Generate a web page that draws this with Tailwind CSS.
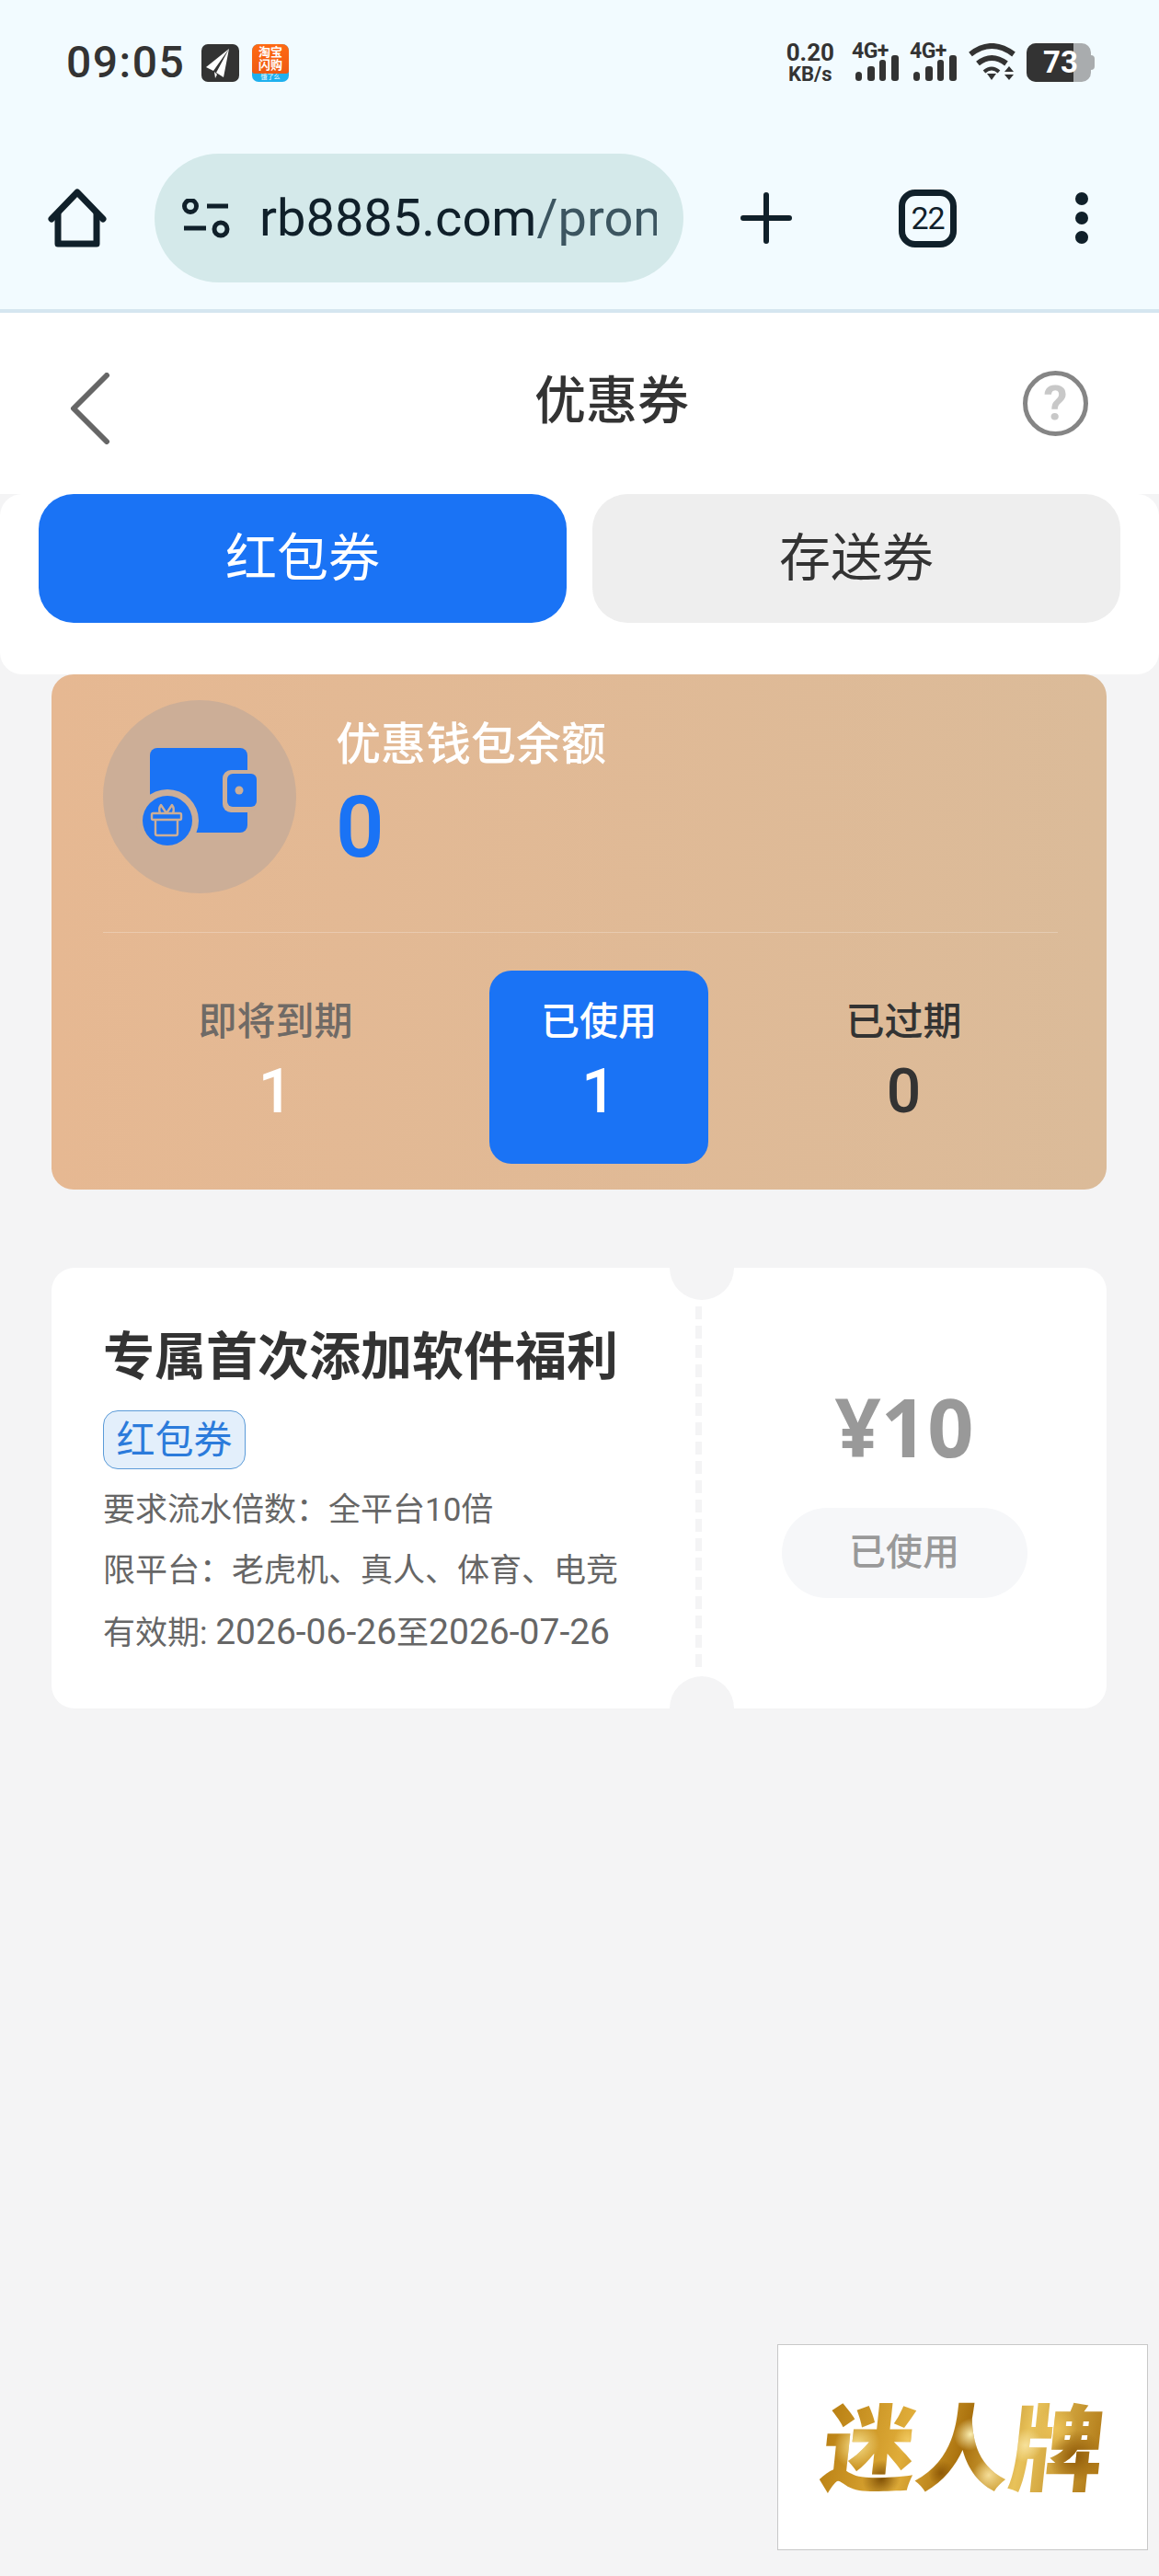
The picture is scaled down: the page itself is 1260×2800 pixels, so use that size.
<!DOCTYPE html>
<html lang="zh-CN">
<head>
  <meta charset="UTF-8">
  <meta name="viewport" content="width=device-width, initial-scale=1.0">
  <script src="https://cdn.jsdelivr.net/npm/@tailwindcss/browser@4"></script>
  <title>优惠券</title>
</head>
<body class="relative min-h-[2800px] bg-[#f4f4f5] font-[Roboto,'Noto_Sans_CJK_SC',sans-serif] text-[#333]">

  <!-- Status bar + browser bar -->
  <div class="bg-[#f2fbff] border-b-4 border-[#d5e6f0]">
    <div class="flex items-center h-[138px] pb-[2px] pl-[72px] pr-[70px]">
      <span class="w-[147px] text-[48px] leading-none font-medium tracking-[1.5px] text-[#333]">09:05</span>
      <svg class="w-[41px] h-[41px]" viewBox="0 0 41 41">
        <rect width="41" height="41" rx="7" fill="#333"/>
        <path d="M30 5 L5 25 L13 29 Z M30 5 L16 31 L24 36 Z M14 30 L15 37 L17 33 Z" fill="#fff"/>
      </svg>
      <div class="ml-[14px] w-[40px] h-[41px] rounded-[7px] overflow-hidden flex flex-col bg-[#1fb0ee]">
        <div class="h-[32px] bg-linear-to-b from-[#ff6a13] to-[#ee5a12] text-white text-[13px] leading-[14px] font-bold text-center pt-[2px] rounded-b-[3px]">淘宝<br>闪购</div>
        <div class="text-white text-[7px] leading-[9px] text-center">饿了么</div>
      </div>

      <div class="ml-auto flex items-center text-[#333]">
        <div class="flex flex-col items-center gap-[2px] font-bold">
          <span class="text-[26px] leading-[24px]">0.20</span>
          <span class="text-[22px] leading-[20px]">KB/s</span>
        </div>
        <svg class="ml-[19px] w-[51px] h-[43px] overflow-visible" viewBox="0 0 51 43" fill="#333">
          <text x="0" y="16" font-size="23" font-weight="700" letter-spacing="-0.5">4G+</text>
          <rect x="4" y="31" width="7" height="10" rx="3.5"/><rect x="17" y="25" width="8" height="16" rx="3"/>
          <rect x="30" y="18" width="7" height="23" rx="3"/><rect x="43" y="13" width="8" height="28" rx="3"/>
        </svg>
        <svg class="ml-[12px] w-[51px] h-[43px] overflow-visible" viewBox="0 0 51 43" fill="#333">
          <text x="0" y="16" font-size="23" font-weight="700" letter-spacing="-0.5">4G+</text>
          <rect x="4" y="31" width="7" height="10" rx="3.5"/><rect x="17" y="25" width="8" height="16" rx="3"/>
          <rect x="30" y="18" width="7" height="23" rx="3"/><rect x="43" y="13" width="8" height="28" rx="3"/>
        </svg>
        <svg class="ml-[12px] w-[53px] h-[42px]" viewBox="0 0 53 42" fill="none" stroke="#333" stroke-width="6">
          <path d="M3 12 Q26 -6 50 12"/>
          <path d="M11 22 Q26 10 42 22"/>
          <path d="M21 33 H31 L26 40 Z" fill="#333" stroke="none"/>
          <path d="M18 31 Q26 24 34 31" stroke-width="4"/>
          <path d="M40 31 L45 25 L50 31 Z M40 34 H50 L45 40 Z" fill="#333" stroke="none"/>
        </svg>
        <div class="ml-[11px] relative w-[74px] h-[42px]">
          <div class="flex h-[42px] w-[70px] rounded-[10px] overflow-hidden bg-[#a9acae]">
            <div class="w-[51px] bg-[#333]"></div>
          </div>
          <div class="absolute left-[70px] top-[13px] w-[4px] h-[16px] rounded-r-[4px] bg-[#a9acae]"></div>
          <span class="absolute left-[18px] top-0 text-[33px] leading-[42px] font-bold text-white">73</span>
        </div>
      </div>
    </div>

    <div class="flex items-center h-[198px] pl-[52px]">
      <svg class="w-[64px] h-[64px]" viewBox="0 0 64 64" fill="none" stroke="#10202a" stroke-width="7" stroke-linecap="round" stroke-linejoin="round">
        <path d="M4 33 L32 4 L60 33"/>
        <path d="M11 27 V60 H53 V27"/>
      </svg>
      <div class="ml-[52px] w-[575px] h-[140px] rounded-full bg-[#d4e9ea] flex items-center pl-[30px]">
        <svg class="w-[52px] h-[43px] shrink-0" viewBox="0 0 52 43" fill="none" stroke="#10202a" stroke-width="5">
          <circle cx="9" cy="8" r="6.5"/>
          <path d="M27 8 H50"/>
          <path d="M2 32 H26"/>
          <circle cx="42" cy="33" r="7"/>
        </svg>
        <div class="ml-[32px] w-[432px] overflow-hidden whitespace-nowrap text-[56px] leading-[70px] text-[#10202a]">rb8885.com<span class="text-[#3c5560]">/prom</span></div>
      </div>
      <svg class="ml-[62px] w-[56px] h-[56px]" viewBox="0 0 56 56" stroke="#10202a" stroke-width="6" stroke-linecap="round">
        <path d="M3 28 H53 M28 3 V53"/>
      </svg>
      <div class="ml-[116px] w-[63px] h-[63px] rounded-[18px] border-[7px] border-[#10202a] flex items-center justify-center text-[34px] leading-none tracking-[-1px] text-[#10202a]">22</div>
      <div class="ml-[129px] flex flex-col gap-[7px]">
        <div class="w-[14px] h-[14px] rounded-full bg-[#10202a]"></div>
        <div class="w-[14px] h-[14px] rounded-full bg-[#10202a]"></div>
        <div class="w-[14px] h-[14px] rounded-full bg-[#10202a]"></div>
      </div>
    </div>
  </div>

  <!-- Page header -->
  <div class="bg-white h-[197px] flex items-center pl-[76px] pr-[77px]">
    <svg class="w-[44px] h-[78px] mt-[10px]" viewBox="0 0 44 78" fill="none" stroke="#666" stroke-width="6" stroke-linecap="round" stroke-linejoin="round">
      <path d="M40 3 L4 39 L40 75" />
    </svg>
    <h1 class="ml-[461px] text-[56px] leading-[70px] font-medium text-[#333] -mt-[6px]">优惠券</h1>
    <div class="ml-auto w-[71px] h-[71px] rounded-full border-[5px] border-[#858585] flex items-center justify-center text-[52px] leading-none font-bold text-[#c8c8c8]">?</div>
  </div>

  <!-- Coupon type tabs -->
  <div class="bg-white rounded-[24px] h-[196px] px-[42px] flex gap-[28px]">
    <div class="w-[574px] h-[140px] rounded-[38px] bg-[#1a73f5] flex items-center justify-center text-[56px] text-white">红包券</div>
    <div class="w-[574px] h-[140px] rounded-[38px] bg-[#eeeeee] flex items-center justify-center text-[56px] text-[#333]">存送券</div>
  </div>

  <!-- Wallet card -->
  <div class="mx-[56px] w-[1147px] h-[560px] rounded-[24px] bg-linear-to-r from-[#e6b892] to-[#dbbb99] pl-[56px] pr-[53px] pt-[28px]">
    <div class="flex gap-[43px]">
      <svg class="w-[210px] h-[210px] shrink-0" viewBox="0 0 210 210">
        <circle cx="105" cy="105" r="105" fill="#ccae97"/>
        <rect x="51" y="52" width="106" height="92" rx="8" fill="#1a73f5"/>
        <rect x="130" y="76" width="37" height="46" rx="9" fill="#ccae97"/>
        <rect x="135" y="80" width="32" height="36" rx="6" fill="#1a73f5"/>
        <circle cx="148" cy="98" r="4.5" fill="#ccae97"/>
        <circle cx="70" cy="131" r="34" fill="#ccae97"/>
        <circle cx="70" cy="131" r="27" fill="#1a73f5"/>
        <g fill="none" stroke="#ccae97" stroke-width="2.4" stroke-linejoin="round">
          <rect x="53" y="123" width="32" height="7" rx="1.5"/>
          <path d="M57 130 V145 Q57 147 59 147 H79 Q81 147 81 145 V130"/>
          <path d="M69 123 L63 114 Q60 118 62 123 M69 123 L75 114 Q78 118 76 123"/>
        </g>
      </svg>
      <div class="pt-[19px]">
        <div class="text-[49px] leading-[60px] font-medium text-white">优惠钱包余额</div>
        <div class="mt-[15px] text-[92px] leading-[90px] font-semibold text-[#1a73f5]">0</div>
      </div>
    </div>
    <div class="mt-[42px] h-px bg-white/25"></div>
    <div class="mt-[41px] grid grid-cols-[375px_238px_335px] gap-x-[45px]">
      <div class="h-[210px] flex flex-col items-center pt-[31px]">
        <span class="text-[42px] leading-[50px] font-medium text-[#6f6a66]">即将到期</span>
        <span class="mt-[13px] text-[66px] leading-[76px] font-medium text-white">1</span>
      </div>
      <div class="h-[210px] rounded-[24px] bg-[#1a73f5] flex flex-col items-center pt-[31px]">
        <span class="text-[42px] leading-[50px] font-medium text-white">已使用</span>
        <span class="mt-[13px] text-[66px] leading-[76px] font-medium text-white">1</span>
      </div>
      <div class="h-[210px] flex flex-col items-center pt-[31px]">
        <span class="text-[42px] leading-[50px] font-medium text-[#333]">已过期</span>
        <span class="mt-[13px] text-[66px] leading-[76px] font-medium text-[#333]">0</span>
      </div>
    </div>
  </div>

  <!-- Coupon -->
  <div class="relative mt-[85px] mx-[56px] w-[1147px] h-[479px] rounded-[25px] bg-white overflow-hidden flex">
    <div class="absolute left-[672px] -top-[35px] w-[70px] h-[70px] rounded-full bg-[#f4f4f5]"></div>
    <div class="absolute left-[672px] -bottom-[35px] w-[70px] h-[70px] rounded-full bg-[#f4f4f5]"></div>
    <div class="w-[700px] pl-[56px] pt-[62px]">
      <h2 class="text-[56px] leading-[70px] font-bold text-[#333] whitespace-nowrap">专属首次添加软件福利</h2>
      <div class="mt-[23px] w-[155px] h-[64px] rounded-[16px] border-[1.5px] border-[#5b9bd8] bg-[#e3effb] flex items-center justify-center text-[42px] text-[#2b7bdb]">红包券</div>
      <div class="mt-[12px] text-[35px] leading-[66px] text-[#666] whitespace-nowrap">
        <p>要求流水倍数：全平台10倍</p>
        <p>限平台：老虎机、真人、体育、电竞</p>
        <p>有效期: <span class="text-[39px]">2026-06-26</span>至<span class="text-[39px]">2026-07-26</span></p>
      </div>
    </div>
    <div class="w-[7px] h-[395px] mt-[42px] bg-[repeating-linear-gradient(to_bottom,#f4f4f5_0,#f4f4f5_14px,transparent_14px,transparent_21px)]"></div>
    <div class="w-[440px] pt-[122px] flex flex-col items-center">
      <div class="font-['Noto_Sans',sans-serif] text-[88px] leading-[100px] font-bold text-[#999]">¥10</div>
      <div class="mt-[39px] w-[267px] h-[98px] rounded-full bg-[#f6f7f9] flex items-center justify-center text-[40px] font-medium text-[#999]">已使用</div>
    </div>
  </div>

  <!-- Floating brand banner -->
  <div class="absolute left-[845px] top-[2548px] w-[403px] h-[224px] border border-[#c8c8c8] bg-white flex items-center justify-center">
    <span class="mt-[8px] -skew-x-6 text-[102px] leading-[120px] font-black text-transparent bg-clip-text bg-[radial-gradient(circle_at_12%_45%,#f7e08c_0,transparent_9%),radial-gradient(circle_at_22%_75%,#7f5006_0,transparent_8%),radial-gradient(circle_at_30%_40%,#f0c860_0,transparent_7%),radial-gradient(circle_at_52%_35%,#fbeeb0_0,transparent_10%),radial-gradient(circle_at_60%_72%,#f5dd97_0,transparent_9%),radial-gradient(circle_at_43%_70%,#8f5a08_0,transparent_7%),radial-gradient(circle_at_72%_45%,#f6e09a_0,transparent_8%),radial-gradient(circle_at_90%_55%,#8f5a08_0,transparent_10%),radial-gradient(circle_at_82%_30%,#ecc258_0,transparent_9%),linear-gradient(100deg,#b67c10,#e0ad3a_30%,#a86f0c_50%,#e8c25a_70%,#a9700e)]">迷人牌</span>
  </div>

</body>
</html>
